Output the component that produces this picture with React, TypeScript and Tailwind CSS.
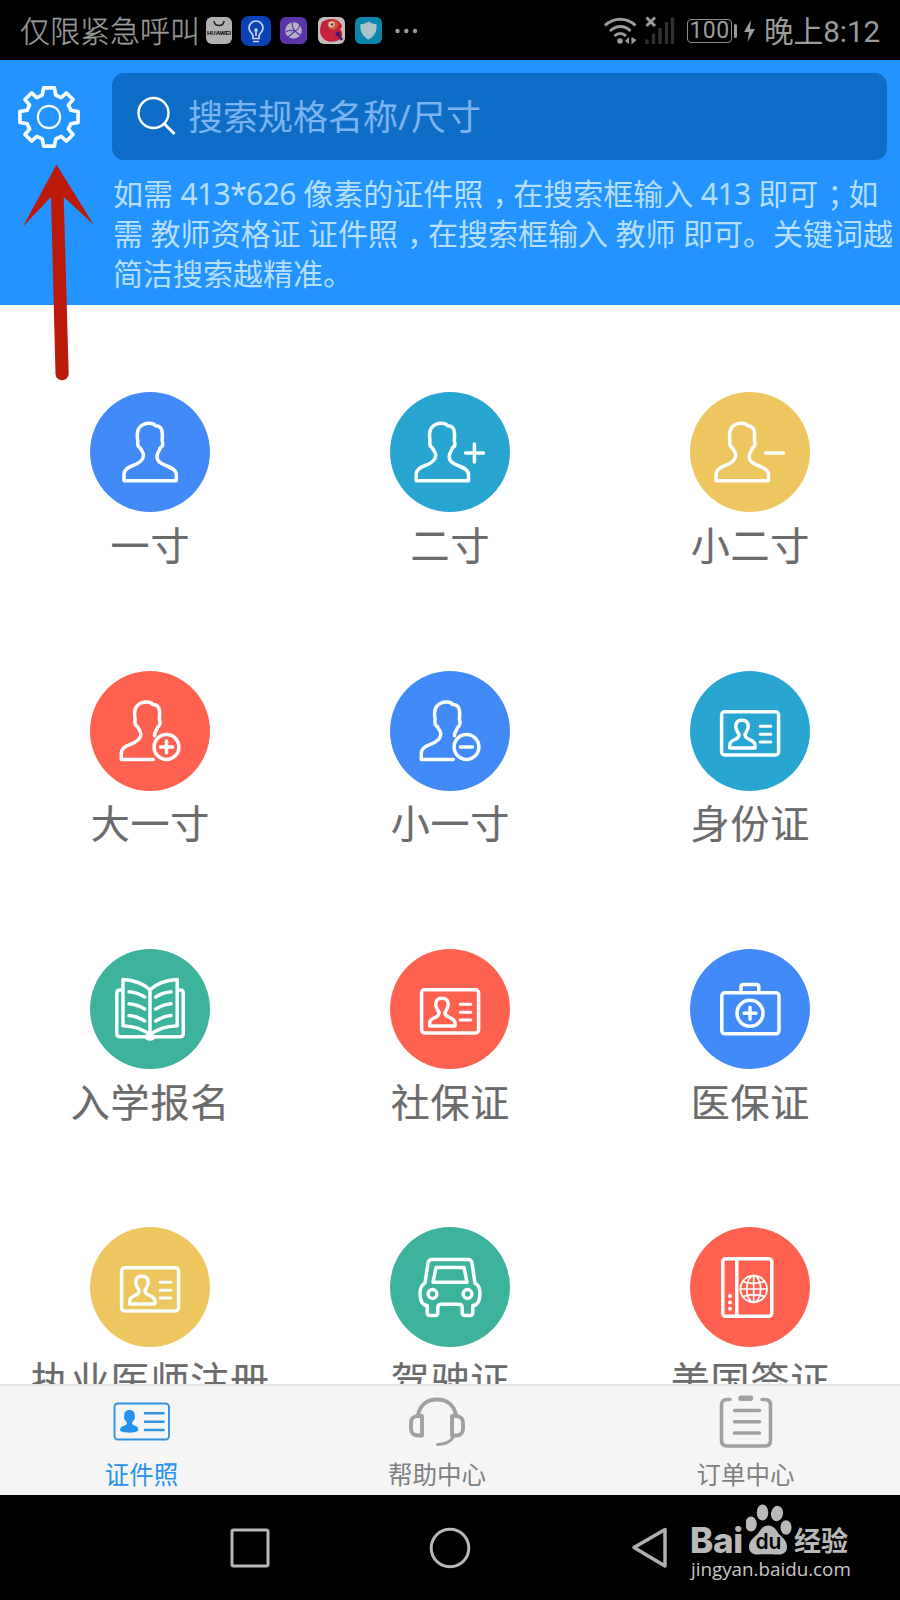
import type { ReactNode } from "react"

const PERSON =
  "M34 88.7V82C34 77 39 75 43 73.5C50 71 53.3 68.5 53.5 63.5C53.5 60 51.5 59 50.3 56C47.6 54.5 47.3 51 47.8 48.5C47 44 47.2 39 49 36.2C51.5 32.5 56 31.3 59.5 31.3C62.5 31.3 64.5 32.5 65.5 33.8C69.5 33.8 71.8 36.5 72.2 40C72.5 43 72.4 46 72.1 48.5C73 51 73 54.5 70 56C69.5 59.5 67 61 67 64.5C67 69.5 70.5 71.5 77 74C82 76 86.3 78 86.3 82.5V88.7Z"

function CircleSvg({ children }: { children: ReactNode }) {
  return (
    <svg
      className="h-[120px] w-[120px]"
      viewBox="0 0 120 120"
      fill="none"
      stroke="#fafeff"
      strokeWidth="3.5"
      strokeLinecap="round"
      strokeLinejoin="round"
    >
      {children}
    </svg>
  )
}

function Person() {
  return (
    <CircleSvg>
      <path d={PERSON} />
    </CircleSvg>
  )
}

function PersonSign({ plus }: { plus?: boolean }) {
  return (
    <CircleSvg>
      <path d={PERSON} transform="translate(-7.8 0)" />
      <path d="M75.5 61H93.5" />
      {plus && <path d="M84.4 52V70" />}
    </CircleSvg>
  )
}

function PersonBadge({ plus }: { plus?: boolean }) {
  return (
    <CircleSvg>
      <path
        transform="translate(-2.7 -0.2)"
        d="M66 88.7H34V82C34 77 39 75 43 73.5C50 71 53.3 68.5 53.5 63.5C53.5 60 51.5 59 50.3 56C47.6 54.5 47.3 51 47.8 48.5C47 44 47.2 39 49 36.2C51.5 32.5 56 31.3 59.5 31.3C62.5 31.3 64.5 32.5 65.5 33.8C69.5 33.8 71.8 36.5 72.2 40C72.5 43 72.4 46 72.1 48.5C73 51 73 54.5 70.3 56.5C69.5 60 67 61 67.2 65"
      />
      <circle cx="76.5" cy="76" r="12.4" />
      <path d="M70.5 76H82.5" />
      {plus && <path d="M76.5 70V82" />}
    </CircleSvg>
  )
}

function IdCard() {
  return (
    <CircleSvg>
      <rect x="31.6" y="40.8" width="57" height="43.2" rx="3" />
      <path d="M39.7 77V74C39.7 71 42.5 69.5 45 68.5C48 67.2 49.3 65.5 49 63.3C48 61.5 46.5 59.5 46 57C45.2 51.5 47.5 49.2 52 49.2C56.5 49.2 58.8 51.5 58 57C57.5 59.5 56 61.5 55 63.3C54.7 65.5 56.5 67.2 59.5 68.5C62 69.7 65 71 65 74V77Z" />
      <path d="M70.2 55.3H80.8M70.2 63.2H80.8M70.2 71H80.8" strokeWidth="3" />
    </CircleSvg>
  )
}

function Book() {
  return (
    <CircleSvg>
      <path d="M32.5 41H30C28 41 26.8 42.3 26.8 44.5V84.5C26.8 86.5 28 87.7 30 87.7H90C92 87.7 93.3 86.5 93.3 84.5V44.5C93.3 42.3 92 41 90 41H87.7" />
      <path d="M33 30.4C44 31 53 34 60 40.8C67 34 76 31 87.2 30.4V76.8C76 77.3 67 80 60 86C53 80 44 77.3 33 76.8ZM60 40.8V86" />
      <path d="M39 42.8C44.5 43.3 50 45 54.7 48M39 54.7C44.5 55.2 50 57 54.7 60M39 66.6C44.5 67.1 50 69 54.7 72M81 42.8C75.5 43.3 70.5 45 65.8 48M81 54.7C75.5 55.2 70.5 57 65.8 60M81 66.6C75.5 67.1 70.5 69 65.8 72" />
      <ellipse cx="60" cy="88.3" rx="3.3" ry="1.6" fill="#fff" />
    </CircleSvg>
  )
}

function MedicalCase() {
  return (
    <CircleSvg>
      <rect x="31.8" y="43.8" width="57.2" height="41" rx="3" />
      <path d="M51 43.5V38C51 36.3 51.8 35.6 53.3 35.6H66.5C68 35.6 68.8 36.3 68.8 38V43.5" />
      <circle cx="60" cy="64.2" r="13" />
      <path d="M54 64.2H66M60 58.2V70.2" />
    </CircleSvg>
  )
}

function Car() {
  return (
    <CircleSvg>
      <path d="M42 32.6H78C80.5 32.6 81.5 33.5 82 36L85 56C89.5 58.5 90.5 63 89.8 69C89.3 75 87 78.3 82.8 78.5V85.5C82.8 87.5 82 88.5 80 88.5H75C73 88.5 72.2 87.5 72.2 85.5V81C72.2 78.5 71.5 77.3 69 77.3H51C48.5 77.3 47.8 78.5 47.8 81V85.5C47.8 87.5 47 88.5 45 88.5H40C38 88.5 37.2 87.5 37.2 85.5V78.5C33 78.3 30.7 75 30.2 69C29.5 63 30.5 58.5 35 56L38 36C38.5 33.5 39.5 32.6 42 32.6Z" />
      <path d="M46 40.4H74L77 55.3H43Z" />
      <circle cx="42.5" cy="67" r="4.4" />
      <circle cx="77.5" cy="67" r="4.4" />
    </CircleSvg>
  )
}

function Passport() {
  return (
    <CircleSvg>
      <rect x="32.8" y="31.8" width="49" height="57.5" rx="3" />
      <path d="M46.8 32V89" />
      <g fill="#fff" stroke="none">
        <circle cx="40" cy="69" r="2" />
        <circle cx="40" cy="75.4" r="2" />
        <circle cx="40" cy="81.8" r="2" />
      </g>
      <g strokeWidth="1.7">
        <circle cx="63.7" cy="62" r="13.3" />
        <ellipse cx="63.7" cy="62" rx="7" ry="13.3" />
        <path d="M63.7 49V75M50.5 62H77M53 54.5C60 57 67.500 57 74.500 54.500M53 69.500C60 67 67.500 67 74.500 69.500" />
      </g>
    </CircleSvg>
  )
}

const items = [
  { label: "一寸", color: "bg-[#428af7]", icon: <Person /> },
  { label: "二寸", color: "bg-[#29a5d2]", icon: <PersonSign plus /> },
  { label: "小二寸", color: "bg-[#edc65f]", icon: <PersonSign /> },
  { label: "大一寸", color: "bg-[#ff6150]", icon: <PersonBadge plus /> },
  { label: "小一寸", color: "bg-[#428af7]", icon: <PersonBadge /> },
  { label: "身份证", color: "bg-[#29a5d2]", icon: <IdCard /> },
  { label: "入学报名", color: "bg-[#3db29d]", icon: <Book /> },
  { label: "社保证", color: "bg-[#ff6150]", icon: <IdCard /> },
  { label: "医保证", color: "bg-[#428af7]", icon: <MedicalCase /> },
  { label: "执业医师注册", color: "bg-[#edc65f]", icon: <IdCard /> },
  { label: "驾驶证", color: "bg-[#3db29d]", icon: <Car /> },
  { label: "美国签证", color: "bg-[#ff6150]", icon: <Passport /> },
]

function StatusBar() {
  return (
    <div className="flex h-[60px] shrink-0 items-center bg-black pl-[20px] pt-[1px] text-[30px] leading-none text-[#9b9b9b]">
      <span className="w-[186px] whitespace-nowrap pt-[1px] font-light [-webkit-text-stroke:0.3px]">仅限紧急呼叫</span>
      <div className="flex h-[27px] w-[26px] flex-col items-center rounded-[6px] bg-[#b0b0b0]">
        <svg className="h-[13px] w-[26px]" viewBox="0 0 26 13" fill="none" stroke="#222" strokeWidth="1.6">
          <path d="M8 4C8.5 10 17.5 10 18 4" />
        </svg>
        <span className="font-['Liberation_Sans'] text-[6px] font-bold leading-[6px] text-black">HUAWEI</span>
      </div>
      <svg className="ml-[9px] h-[30px] w-[30px]" viewBox="0 0 30 30" fill="none" stroke="#c5d5f5" strokeWidth="1.7">
        <rect width="30" height="30" rx="8" fill="#0b41b5" stroke="none" />
        <path d="M12 20C12 17 8 16.5 8 12A7 7 0 0 1 22 12C22 16.5 18 17 18 20V22.5H12ZM12 25.5H18M15 14V20" />
        <circle cx="15" cy="14" r="1" />
      </svg>
      <svg className="ml-[9px] h-[27px] w-[27px]" viewBox="0 0 27 27" fill="none" stroke="#5b35a8" strokeWidth="1.2">
        <rect width="27" height="27" rx="6" fill="#5b35a8" stroke="none" />
        <circle cx="13.5" cy="13.5" r="8.3" fill="#b5b0c5" stroke="none" />
        <path d="M12 5C12 10 13 12 15 14C17 16 20 18 21 18M6 15C10 12 13 14 15 14C18 13 20 10 19.5 7M8 20C11 18 13 16 15 14" />
      </svg>
      <svg className="ml-[11px] h-[27px] w-[27px]" viewBox="0 0 27 27">
        <rect width="27" height="27" rx="6" fill="#c4bcbc" />
        <path d="M4 5L8 3C13 1 20 2 22 6C25 8 24 11 22 12C26 16 24 21 21 23C15 26 7 25 4 20C1 15 2 10 4 5Z" fill="#c4213c" />
        <path d="M12 4C17 2 21 5 20 9C19 13 14 14 11 11C9 8 9 5 12 4Z" fill="#c9582c" />
        <circle cx="13.5" cy="7.5" r="3" fill="#d8c8c4" />
        <circle cx="14" cy="7.5" r="1.2" fill="#702030" />
        <path d="M20 17L24 23" stroke="#4a1a70" strokeWidth="2.5" />
        <circle cx="20" cy="17" r="2.5" fill="#4a1a70" />
      </svg>
      <svg className="ml-[10px] h-[27px] w-[27px]" viewBox="0 0 27 27">
        <rect width="27" height="27" rx="6" fill="#0a85ab" />
        <path d="M13.5 4.5C16 6.5 19 7 21.5 7C22.3 14 19.5 19.5 13.5 22.5C7.5 19.5 4.7 14 5.5 7C8 7 11 6.5 13.5 4.5Z" fill="#a9c3cb" />
      </svg>
      <svg className="ml-[13px] h-[6px] w-[23px]" viewBox="0 0 23 6" fill="#9b9b9b">
        <circle cx="2.5" cy="3" r="2.2" />
        <circle cx="11.3" cy="3" r="2.2" />
        <circle cx="20" cy="3" r="2.2" />
      </svg>
      <svg className="ml-[185px] h-[30px] w-[72px]" viewBox="0 0 72 30" fill="none" stroke="#9b9b9b" strokeWidth="3">
        <path d="M2 9.5C10.5 1 24 1 32.5 9.5M7 15C13.5 9 21.5 9 27.5 15M11.5 20C15 16.5 19.5 16.5 23 20" />
        <circle cx="17" cy="25" r="2.8" fill="#9b9b9b" stroke="none" />
        <path d="M22 25L26 21V28ZM33.5 24L28.5 28.5V21Z" fill="#9b9b9b" stroke="none" />
        <path d="M43.5 1.5L52 10M52 1.5L43.5 10" />
        <path d="M44 28V23.5M50.5 28V17.5M57 28V12M63.5 28V6M69.5 28V1.5" stroke="#303030" strokeWidth="3.4" />
      </svg>
      <div className="ml-[12px] flex h-[24px] w-[45px] items-center justify-center rounded-[4px] border-[1.5px] border-[#8c8c8c] font-['Roboto'] text-[23px] tracking-[0.4px]">
        100
      </div>
      <div className="ml-[2px] h-[14px] w-[3px] rounded-sm bg-[#9b9b9b]" />
      <svg className="ml-[7px] h-[22px] w-[11px]" viewBox="0 0 11 22" fill="#9b9b9b">
        <path d="M7 0L0 12H5L3.5 22L11 9H6Z" />
      </svg>
      <span className="ml-[9px] whitespace-nowrap pt-[4px] font-['Roboto','Noto_Sans_CJK_SC',sans-serif] text-[29.6px]">晚上8:12</span>
    </div>
  )
}

// half-width glyph padded out so the mark sits in the middle of its cell
function Punct({ children }: { children: ReactNode }) {
  return <span className="pl-[9px] pr-[6px] [font-feature-settings:'halt']">{children}</span>
}

function Header() {
  return (
    <header className="flex h-[245px] shrink-0 bg-[#2394ff]">
      <div className="w-[112px] shrink-0 pl-[17px] pt-[25px]">
        <svg
          className="h-[64px] w-[64px]"
          viewBox="-33 -33 66 66"
          fill="none"
          stroke="#f5fcff"
          strokeWidth="3.8"
          strokeLinejoin="round"
        >
          <path d="M-7 -22.5L-5.5 -30H5.5L7 -22.5L12.5 -20L18 -24.8L24.8 -18L20 -12.5L22.5 -7L30 -5.5V5.5L22.5 7L20 12.5L24.8 18L18 24.8L12.5 20L7 22.5L5.5 30H-5.5L-7 22.5L-12.5 20L-18 24.8L-24.8 18L-20 12.5L-22.5 7L-30 5.5V-5.5L-22.5 -7L-20 -12.5L-24.8 -18L-18 -24.8L-12.5 -20Z" />
          <circle r="11.5" strokeWidth="2.2" />
        </svg>
      </div>
      <div className="flex-1 pt-[12.5px]">
        <div className="flex h-[87.5px] w-[775px] items-center rounded-xl bg-[#0e6dc7] pl-[25px]">
          <svg className="h-[40px] w-[40px]" viewBox="0 0 40 40" fill="none" stroke="#fff" strokeWidth="2.4">
            <circle cx="16.5" cy="17" r="15" />
            <path d="M27 27.5L37.5 38" strokeWidth="3" />
          </svg>
          <span className="ml-[11px] whitespace-nowrap text-[35px] leading-none text-[#7bb4f0]">搜索规格名称/尺寸</span>
        </div>
        <p className="whitespace-nowrap pl-[1px] pt-[13.5px] text-[30px] leading-[40px] text-[#b5deff] [word-spacing:-0.3px]">
          如需 <span className="tracking-[-0.6px]">413*626</span> 像素的证件照<Punct>，</Punct>在搜索框输入{" "}
          <span className="tracking-[-0.5px]">413</span> 即可<Punct>；</Punct>如
          <br />
          需 教师资格证 证件照<Punct>，</Punct>在搜索框输入 教师 即可。关键词越
          <br />
          简洁搜索越精准。
        </p>
      </div>
    </header>
  )
}

function TabBar() {
  return (
    <nav className="grid h-[111px] shrink-0 grid-cols-[283px_308px_309px] border-t-2 border-[#e2e2e2] bg-[#f5f5f5] text-[24.5px] leading-[36px] text-[#808080]">
      <div className="flex flex-col items-center gap-[6px] pt-[5px] text-[#2592ee]">
        <svg className="h-[60px] w-[60px] shrink-0" viewBox="0 0 60 60" fill="none" stroke="#2f93e4" strokeWidth="1.9" strokeLinecap="round">
          <rect x="2.5" y="12.5" width="54.5" height="36" rx="3.5" />
          <path
            d="M8.2 39C8.2 35 11 35.5 14.5 33.5C15.5 32 14.5 31 13 29C12 28 12 27 12.2 25C12 20.5 14.5 19 17.5 19C20.5 19 23 20.5 22.8 25C23 27 23 28 22 29C20.5 31 19.5 32 20.5 33.5C24 35.5 26.3 35 26.3 39C26.3 42.5 8.2 42.5 8.2 39Z"
            fill="#2592ee"
            stroke="none"
          />
          <path d="M33 22.3H51.5M33 30.7H51.5M33 39H51.5" strokeWidth="2.6" />
        </svg>
        <span>证件照</span>
      </div>
      <div className="flex flex-col items-center gap-[6px] pt-[5px]">
        <svg className="h-[60px] w-[60px] shrink-0" viewBox="0 0 60 60" fill="none" stroke="#a0a0a0" strokeWidth="3.9" strokeLinecap="round">
          <path d="M11 24C13 14 20 8.5 30 8.5C40 8.5 47 14 49 24" />
          <path
            d="M15 25V44.5H11C6.5 44.5 4 41.5 4 38V31.5C4 28 6.5 25 11 25ZM45 25V44.5H49C53.5 44.5 56 41.5 56 38V31.5C56 28 53.5 25 49 25Z"
            strokeLinejoin="round"
          />
          <path d="M47 45C44 50.5 38 53.3 30.5 53.5" strokeWidth="2.9" />
        </svg>
        <span>帮助中心</span>
      </div>
      <div className="flex flex-col items-center gap-[6px] pt-[5px]">
        <svg className="h-[60px] w-[60px] shrink-0" viewBox="0 0 60 60" fill="none" stroke="#a0a0a0" strokeWidth="3.6" strokeLinecap="round">
          <path d="M14 8.5H11C7.5 8.5 5.5 10.5 5.5 14V49.5C5.5 53 7.5 55 11 55H49C52.5 55 54.5 53 54.5 49.5V14C54.5 10.5 52.5 8.5 49 8.5H46M18.5 19.5H43.5M18.5 30.8H43.5M18.5 42H43.5" />
          <path d="M25 7.3H34.5" strokeWidth="5.5" />
        </svg>
        <span>订单中心</span>
      </div>
    </nav>
  )
}

function SystemNav() {
  return (
    <div className="flex h-[105px] shrink-0 bg-black pt-[4px] text-[#b9b9b9]">
      <div className="flex pl-[229px] pt-[28px]">
        <svg className="h-[42px] w-[42px]" viewBox="0 0 42 42" fill="none" stroke="#b9b9b9" strokeWidth="3">
          <rect x="3" y="3" width="36" height="36" rx="1.5" />
        </svg>
        <svg className="ml-[158px] h-[42px] w-[42px]" viewBox="0 0 42 42" fill="none" stroke="#b9b9b9" strokeWidth="3">
          <circle cx="21" cy="21" r="18.8" />
        </svg>
        <svg className="ml-[160px] h-[42px] w-[37px]" viewBox="0 0 37 42" fill="none" stroke="#b0b0b0" strokeWidth="3.5" strokeLinejoin="round">
          <path d="M3 20.5L34 2.5V39Z" />
        </svg>
      </div>
      <div className="ml-[21px] flex w-[170px] flex-col">
        <div className="flex h-[57px] items-start whitespace-nowrap pt-[5px]">
          <span className="w-[57px] pl-[1px] pt-[15.5px] font-['Inter'] text-[35px] font-extrabold leading-[40px] tracking-[-0.3px]">
            Bai
          </span>
          <div className="relative h-[52px] w-[48px] shrink-0">
            <svg className="h-[52px] w-[48px]" viewBox="0 0 48 52" fill="#b9b9b9">
              <ellipse cx="5" cy="20" rx="5.8" ry="7.5" />
              <ellipse cx="16.5" cy="8.5" rx="5.8" ry="8" />
              <ellipse cx="31" cy="9.5" rx="6" ry="7.7" transform="rotate(12 31 9.5)" />
              <ellipse cx="40" cy="23.5" rx="5.5" ry="7.3" />
              <path d="M22 21.5C28 21.5 30 26 33 30C37 34 41 37 41 43C41 49 36 51 31 50.5C26 50 18 50 13 50.5C8 51 3 49 3 43C3 36 9 33 12 29.5C15 25.5 17 21.5 22 21.5Z" />
            </svg>
            <span className="absolute left-[9.5px] top-[27px] font-['Inter'] text-[21px] font-semibold leading-[22px] text-black">
              du
            </span>
          </div>
          <span className="pt-[17.5px] text-[27px] font-bold leading-[38px]">经验</span>
        </div>
        <span className="whitespace-nowrap pl-[2px] font-['Open_Sans'] text-[18.8px] leading-[26px] text-[#c8c8c8]">
          jingyan.baidu.com
        </span>
      </div>
    </div>
  )
}

export default function App() {
  return (
    <div
      className="relative flex h-[1600px] w-[900px] flex-col overflow-hidden bg-white font-['Noto_Sans','Noto_Sans_CJK_SC',sans-serif]"
      lang="zh-CN"
    >
      <StatusBar />
      <Header />
      <main className="grid h-[1079px] shrink-0 auto-rows-[278.4px] grid-cols-3 overflow-hidden pt-[87.2px]">
        {items.map((item) => (
          <div key={item.label} className="flex flex-col items-center">
            <div className={`h-[120px] w-[120px] rounded-full ${item.color}`}>{item.icon}</div>
            <span className="mt-[2.6px] whitespace-nowrap pl-[0.8px] text-[39px] leading-[60px] tracking-[0.8px] text-[#6b6b6b] [-webkit-text-stroke:0.2px]">
              {item.label}
            </span>
          </div>
        ))}
      </main>
      <TabBar />
      <SystemNav />
      {/* hand-drawn pointer to the settings gear */}
      <svg className="pointer-events-none absolute left-[20px] top-[160px] h-[225px] w-[80px]" viewBox="20 160 80 225" fill="#bb1a0b">
        <path d="M56.5 164.5L93.5 224.5L63.7 197L68.7 373.5A6.5 6.5 0 0 1 55.5 374L51 197L23 226.5Z" />
      </svg>
    </div>
  )
}
